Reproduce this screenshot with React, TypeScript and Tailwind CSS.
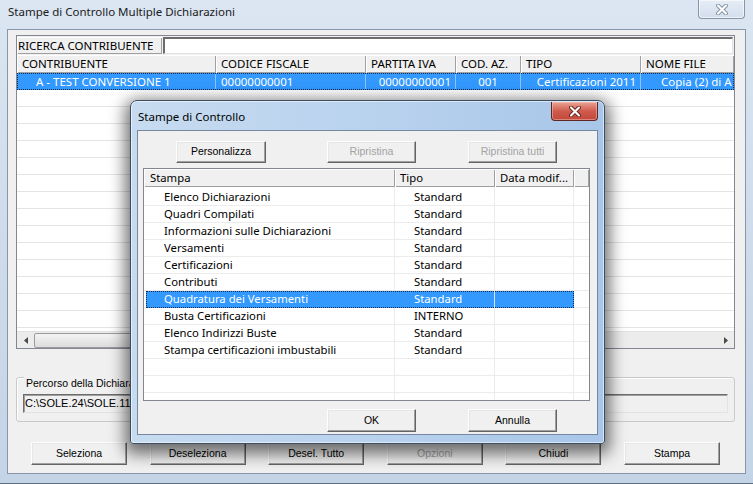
import React from 'react';

const seg = "font-['Noto_Sans',sans-serif] text-[11.5px]";
const mss = "font-['Liberation_Sans',Arial,sans-serif] text-[10.5px]";

const Btn = ({ label, disabled = false, w = 'w-[96px]', h = 'h-[23px]' }: { label: string; disabled?: boolean; w?: string; h?: string }) => (
  <div
    className={`${w} ${h} shrink-0 flex items-center justify-center bg-[#f0f0f0] border border-t-[#fdfdfd] border-l-[#fdfdfd] border-r-[#646464] border-b-[#646464] shadow-[inset_-1px_-1px_0_#a0a0a0,inset_1px_1px_0_#e6e6e6] ${mss} ${disabled ? 'text-[#a3a3a3]' : 'text-black'}`}
  >
    {label}
  </div>
);

const CloseGlyph = ({ stroke, fill }: { stroke: string; fill: string }) => (
  <svg width="12" height="11" viewBox="0 0 12 11">
    <path d="M2 1.5 L10 9.5 M10 1.5 L2 9.5" stroke={stroke} strokeWidth="4" strokeLinecap="round" />
    <path d="M2 1.5 L10 9.5 M10 1.5 L2 9.5" stroke={fill} strokeWidth="2" strokeLinecap="round" />
  </svg>
);

const Arrow = ({ dir }: { dir: 'l' | 'r' }) => (
  <svg width="4" height="7" viewBox="0 0 4 7">
    <polygon points={dir === 'l' ? '4,0 4,7 0,3.5' : '0,0 0,7 4,3.5'} fill="#4a4a4a" />
  </svg>
);

const headCell = 'h-full flex items-center shrink-0 bg-[#f0f0f0] shadow-[inset_1px_1px_0_#ffffff,inset_-1px_-1px_0_#a0a0a0]';

const stampe = [
  ['Elenco Dichiarazioni', 'Standard'],
  ['Quadri Compilati', 'Standard'],
  ['Informazioni sulle Dichiarazioni', 'Standard'],
  ['Versamenti', 'Standard'],
  ['Certificazioni', 'Standard'],
  ['Contributi', 'Standard'],
  ['Quadratura dei Versamenti', 'Standard'],
  ['Busta Certificazioni', 'INTERNO'],
  ['Elenco Indirizzi Buste', 'Standard'],
  ['Stampa certificazioni imbustabili', 'Standard'],
  ['', ''],
  ['', ''],
  ['', ''],
];

export default function App() {
  return (
    <div className="relative w-[753px] h-[484px] overflow-hidden flex flex-col bg-gradient-to-b from-[#dbe6f2] via-[#cfdbea] to-[#c4d4e6] border-b border-[#5b6b7e]">
      {/* main title bar */}
      <div className={`h-[29px] shrink-0 flex items-start pl-[8px] pt-[3px] ${seg} text-[#1a1a1a]`}>
        Stampe di Controllo Multiple Dichiarazioni
      </div>
      <div className="absolute right-[8px] top-0 w-[47px] h-[19px] rounded-b-[4px] border border-t-0 border-[#8596ab] bg-gradient-to-b from-[#e6edf6] to-[#d3deec] shadow-[inset_0_0_0_1px_rgba(255,255,255,0.6)] flex items-center justify-center">
        <CloseGlyph stroke="#8a96a5" fill="#ffffff" />
      </div>

      {/* main client */}
      <div className="mx-[7px] h-[445px] shrink-0 border border-[#8797ab] bg-[#f0f0f0] flex flex-col">
        {/* grid */}
        <div className="ml-[8px] mt-[5px] w-[719px] h-[314px] shrink-0 border border-[#828790] bg-white flex flex-col overflow-hidden">
          <div className="h-[19px] shrink-0 flex py-[1px] bg-[#f0f0f0]">
            <div className={`w-[145px] ${headCell} pl-[1px] ${seg} text-black`}>RICERCA CONTRIBUENTE</div>
            <div className="flex-1 ml-[1px] mr-[1px] bg-white border-t-2 border-l-2 border-[#6d6d6d] border-r border-b border-r-[#e3e3e3] border-b-[#e3e3e3]" />
          </div>
          <div className={`h-[18px] shrink-0 flex ${seg} text-black`}>
            <div className={`w-[199px] pl-[5px] ${headCell}`}>CONTRIBUENTE</div>
            <div className={`w-[150px] pl-[5px] ${headCell}`}>CODICE FISCALE</div>
            <div className={`w-[90px] pl-[5px] ${headCell}`}>PARTITA IVA</div>
            <div className={`w-[65px] pl-[5px] ${headCell}`}>COD. AZ.</div>
            <div className={`w-[120px] pl-[5px] ${headCell}`}>TIPO</div>
            <div className={`flex-1 pl-[5px] ${headCell}`}>NOME FILE</div>
          </div>
          <div className="flex-1 overflow-hidden flex flex-col">
            <div className={`h-[17px] shrink-0 flex bg-[#3399ff] text-white ${seg} outline-1 outline-dotted outline-[#0d2a4f] -outline-offset-1`}>
              <div className="w-[199px] shrink-0 pl-[19px] flex items-center border-r border-[#8cc4ff]">A - TEST CONVERSIONE 1</div>
              <div className="w-[150px] shrink-0 pl-[5px] flex items-center border-r border-[#8cc4ff]">00000000001</div>
              <div className="w-[90px] shrink-0 pr-[4px] flex items-center justify-end border-r border-[#8cc4ff]">00000000001</div>
              <div className="w-[65px] shrink-0 flex items-center justify-center border-r border-[#8cc4ff]">001</div>
              <div className="w-[120px] shrink-0 pr-[4px] flex items-center justify-end border-r border-[#8cc4ff]">Certificazioni 2011</div>
              <div className="flex-1 pl-[20px] flex items-center whitespace-nowrap">Copia (2) di A</div>
            </div>
            {Array.from({ length: 15 }).map((_, i) => (
              <div key={i} className="h-[17px] shrink-0 border-b border-[#e4e4e4]" />
            ))}
          </div>
          {/* horizontal scrollbar */}
          <div className="h-[17px] shrink-0 flex bg-[#ececec] border-t border-[#e2e2e2]">
            <div className="w-[17px] flex items-center justify-center"><Arrow dir="l" /></div>
            <div className="flex-1 flex items-center">
              <div className="w-[560px] h-[15px] rounded-[2px] border border-[#9b9b9b] bg-gradient-to-b from-[#f4f4f4] to-[#dddddd]" />
            </div>
            <div className="w-[17px] flex items-center justify-center"><Arrow dir="r" /></div>
          </div>
        </div>

        {/* group box */}
        <div className="relative ml-[8px] mt-[28px] w-[719px] h-[45px] shrink-0 rounded-[3px] border border-[#c9c9c9] shadow-[inset_1px_1px_0_#ffffff]">
          <span className={`absolute left-[7px] top-[-2px] px-[2px] leading-[14px] bg-[#f0f0f0] ${mss} text-black`}>Percorso della Dichiarazione</span>
          <div className={`mt-[16px] mx-[6px] h-[19px] flex items-center pl-[1px] bg-[#f0f0f0] border border-t-[#6d6d6d] border-l-[#6d6d6d] border-r-[#e3e3e3] border-b-[#e3e3e3] shadow-[inset_1px_1px_0_#a0a0a0] ${mss} text-[11px] text-black whitespace-nowrap overflow-hidden`}>
            C:\SOLE.24\SOLE.11\ARCHIVIO\DICHIARAZIONI\
          </div>
        </div>

        {/* buttons */}
        <div className="mt-[20px] pl-[23px] flex gap-[22.6px]">
          <Btn label="Seleziona" />
          <Btn label="Deseleziona" />
          <Btn label="Desel. Tutto" />
          <Btn label="Opzioni" disabled />
          <Btn label="Chiudi" />
          <Btn label="Stampa" />
        </div>
      </div>

      {/* dialog window */}
      <div className="absolute left-[130px] top-[100px] w-[475px] h-[344px] rounded-t-[7px] rounded-b-[3px] border border-[#3b4d63] bg-gradient-to-r from-[#c7dbf0] via-[#b9d2ee] to-[#a8c6e9] shadow-[0_5px_16px_5px_rgba(0,0,0,0.55),inset_0_0_0_1px_rgba(255,255,255,0.55)] flex flex-col">
        <div className={`h-[29px] shrink-0 flex items-center pl-[7px] pt-[3px] ${seg} text-black`}>Stampe di Controllo</div>
        <div className="absolute right-[6px] top-[1px] w-[47px] h-[19px] rounded-b-[4px] border border-t-0 border-[#5e2723] bg-gradient-to-b from-[#e8a496] via-[#cf5b4d] to-[#c2473a] shadow-[inset_0_0_0_1px_rgba(255,210,200,0.45)] flex items-center justify-center">
          <CloseGlyph stroke="#6e2a24" fill="#ffffff" />
        </div>

        <div className="mx-[6px] h-[305px] shrink-0 border border-[#75889f] bg-[#f0f0f0] flex flex-col">
          <div className="mt-[10px] flex">
            <div className="ml-[38px]"><Btn label="Personalizza" w="w-[90px]" h="h-[22px]" /></div>
            <div className="ml-[61px]"><Btn label="Ripristina" w="w-[89px]" h="h-[22px]" disabled /></div>
            <div className="ml-[52px]"><Btn label="Ripristina tutti" w="w-[89px]" h="h-[22px]" disabled /></div>
          </div>

          {/* list view */}
          <div className={`ml-[5px] mt-[5px] w-[447px] h-[233px] shrink-0 border border-[#828790] bg-white overflow-hidden flex flex-col font-['Noto_Sans',sans-serif] text-[11.3px]`}>
            <div className="h-[18px] shrink-0 flex text-black">
              <div className={`w-[251px] pl-[6px] ${headCell}`}>Stampa</div>
              <div className={`w-[100px] pl-[5px] ${headCell}`}>Tipo</div>
              <div className={`w-[79px] pl-[5px] ${headCell}`}>Data modif...</div>
              <div className={`flex-1 ${headCell}`} />
            </div>
            <div className="h-[2px] shrink-0 flex">
              <div className="w-[251px] border-r border-[#ececec]" />
              <div className="w-[100px] border-r border-[#ececec]" />
              <div className="w-[79px] border-r border-[#ececec]" />
            </div>
            {stampe.map(([nome, tipo], i) => {
              const sel = i === 6;
              return (
                <div key={i} className="h-[17px] shrink-0 flex leading-[16px]">
                  <div className="w-[2px] shrink-0 border-b border-[#ececec]" />
                  <div className={`w-[428px] shrink-0 flex ${sel ? 'bg-[#3399ff] text-white outline-1 outline-dotted outline-[#0d2a4f] -outline-offset-1' : 'text-black border-b border-[#ececec]'}`}>
                    <div className={`w-[249px] shrink-0 pl-[18px] border-r ${sel ? 'border-[#3399ff]' : 'border-[#ececec]'} whitespace-nowrap`}>{nome}</div>
                    <div className={`w-[100px] shrink-0 pl-[19px] border-r ${sel ? 'border-[#cfe6ff]' : 'border-[#ececec]'}`}>{tipo}</div>
                    <div className={`w-[79px] shrink-0 border-r ${sel ? 'border-[#3399ff]' : 'border-[#ececec]'}`} />
                  </div>
                  <div className="flex-1 border-b border-[#ececec]" />
                </div>
              );
            })}
          </div>

          <div className="mt-[8px] flex">
            <div className="ml-[189px]"><Btn label="OK" w="w-[89px]" /></div>
            <div className="ml-[52px]"><Btn label="Annulla" w="w-[89px]" /></div>
          </div>
        </div>
      </div>
    </div>
  );
}
